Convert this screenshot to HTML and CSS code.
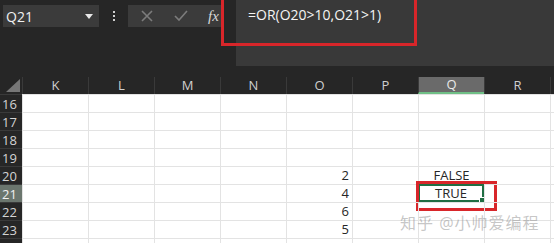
FILE: index.html
```html
<!DOCTYPE html>
<html lang="zh">
<head>
    <meta charset="UTF-8">
    <title>Excel OR</title>
    <link rel="stylesheet" href="styles.css">
</head>
<body>
    <div class="app">
        <div class="toolbar">
            <div class="namebox">
                <span>Q21</span>
                <svg class="arrow" width="8" height="5" viewBox="0 0 8 5"><path d="M0 0H8L4 5Z" fill="#e8e8e8"/></svg>
            </div>
            <div class="dots"><i></i><i></i><i></i></div>
            <div class="buttons">
                <svg width="14" height="14" viewBox="0 0 14 14"><path d="M2 2L12 12M12 2L2 12" stroke="#7c7c7c" stroke-width="1.6"/></svg>
                <svg width="16" height="14" viewBox="0 0 16 14"><path d="M2 7L6 11L14 2" stroke="#7c7c7c" stroke-width="1.6" fill="none"/></svg>
                <span class="fx">fx</span>
            </div>
            <div class="formula">=OR(O20&gt;10,O21&gt;1)</div>
            <div class="mark top"></div>
        </div>
        <div class="sheet">
            <div class="corner"><svg width="14" height="13" viewBox="0 0 14 13"><path d="M14 0V13H0Z" fill="#777"/></svg></div>
            <div class="col">K</div>
            <div class="col">L</div>
            <div class="col">M</div>
            <div class="col">N</div>
            <div class="col">O</div>
            <div class="col">P</div>
            <div class="col sel">Q</div>
            <div class="col">R</div>
            <div class="col"></div>
        </div>
        <div class="sheet rows"></div>
        <div class="watermark">知乎 @小帅爱编程</div>
    </div>
    <script>
let rows = document.querySelector('.rows');
let values = {
    20: {O: '2', Q: 'FALSE'},
    21: {O: '4', Q: 'TRUE'},
    22: {O: '6'},
    23: {O: '5'}
};
let cols = ['K','L','M','N','O','P','Q','R',''];
for(let r = 16; r <= 24; r++){
    let head = document.createElement('div');
    head.className = 'rowhead' + (r == 21 ? ' sel' : '');
    head.innerText = r <= 23 ? r : '';
    rows.append(head);
    cols.forEach(c => {
        let cell = document.createElement('div');
        cell.className = 'cell';
        let v = values[r] && values[r][c];
        if(v){
            cell.innerText = v;
            cell.classList.add(c == 'O' ? 'num' : 'center');
        }
        if(r == 21 && c == 'Q'){
            cell.classList.add('active');
            cell.innerHTML += '<span class="handle"></span><span class="mark"></span>';
        }
        rows.append(cell);
    });
}
    </script>
</body>
</html>
```

FILE: styles.css
```css
body{
    margin: 0;
    background: #fff;
    font-family: "Open Sans", "Liberation Sans", "Noto Sans CJK SC", sans-serif;
}
.app{
    position: relative;
    width: 554px;
    height: 243px;
    overflow: hidden;
}
.toolbar{
    position: relative;
    height: 77px;
    background: #262626;
    display: flex;
    align-items: flex-start;
}
.namebox{
    margin: 5px 0 0 3px;
    width: 96px;
    height: 22px;
    background: #3b3b3b;
    color: #f0f0f0;
    font-size: 14px;
    display: flex;
    align-items: center;
    justify-content: space-between;
    padding: 0 6px 0 3px;
    box-sizing: border-box;
}
.dots{
    width: 29px;
    height: 32px;
    display: flex;
    flex-direction: column;
    align-items: center;
    justify-content: center;
    gap: 2px;
}
.dots i{
    width: 2px;
    height: 2px;
    background: #d0d0d0;
}
.buttons{
    margin-top: 5px;
    width: 94px;
    height: 22px;
    background: #3b3b3b;
    display: flex;
    align-items: center;
    padding-left: 12px;
    gap: 19px;
    box-sizing: border-box;
}
.fx{
    font-family: "Liberation Serif", serif;
    font-style: italic;
    font-size: 15px;
    color: #d8d8d8;
}
.formula{
    margin-left: 14px;
    flex: 1;
    height: 66px;
    background: #393939;
    color: #f4f4f4;
    font-size: 14px;
    padding: 5px 0 0 12px;
    box-sizing: border-box;
}
.mark{
    position: absolute;
    border: 3px solid #d8262a;
    box-sizing: border-box;
}
.mark.top{
    left: 221px;
    top: -4px;
    width: 196px;
    height: 50px;
}
.sheet{
    display: grid;
    grid-template-columns: 22px repeat(8, 66px) 4px;
}
.corner{
    height: 17px;
    background: #262626;
    display: flex;
    align-items: flex-end;
    justify-content: flex-end;
    padding: 0 2px 2px 0;
    box-sizing: border-box;
}
.col{
    height: 17px;
    background: #262626;
    color: #cfcfcf;
    font-size: 13px;
    line-height: 17px;
    text-align: center;
    border-left: 1px solid #3a3a3a;
    box-sizing: border-box;
}
.col.sel{
    background: #6a6a6a;
    color: #e8e8e8;
    border-bottom: 2px solid #6fbf86;
    line-height: 15px;
}
.rowhead{
    height: 18px;
    background: #262626;
    color: #d4d4d4;
    font-size: 13px;
    line-height: 18px;
    padding-left: 2px;
    border-top: 1px solid #3a3a3a;
    box-sizing: border-box;
}
.rowhead.sel{
    background: #6b766e;
    color: #f0f0f0;
}
.cell{
    position: relative;
    height: 18px;
    border-top: 1px solid #e3e3e3;
    border-left: 1px solid #e3e3e3;
    box-sizing: border-box;
    font-size: 13px;
    line-height: 17px;
    color: #262626;
}
.num{
    text-align: right;
    padding-right: 3px;
}
.center{
    text-align: center;
}
.cell.active{
    border: 2px solid #1f6e43;
    line-height: 14px;
}
.handle{
    position: absolute;
    right: -4px;
    bottom: -4px;
    width: 5px;
    height: 5px;
    background: #1f6e43;
    border: 1px solid #fff;
}
.cell .mark{
    left: -4px;
    top: -5px;
    width: 81px;
    height: 30px;
}
.watermark{
    position: absolute;
    left: 400px;
    top: 210px;
    font-size: 16px;
    color: rgba(150, 150, 150, 0.55);
    letter-spacing: 1px;
}
```
